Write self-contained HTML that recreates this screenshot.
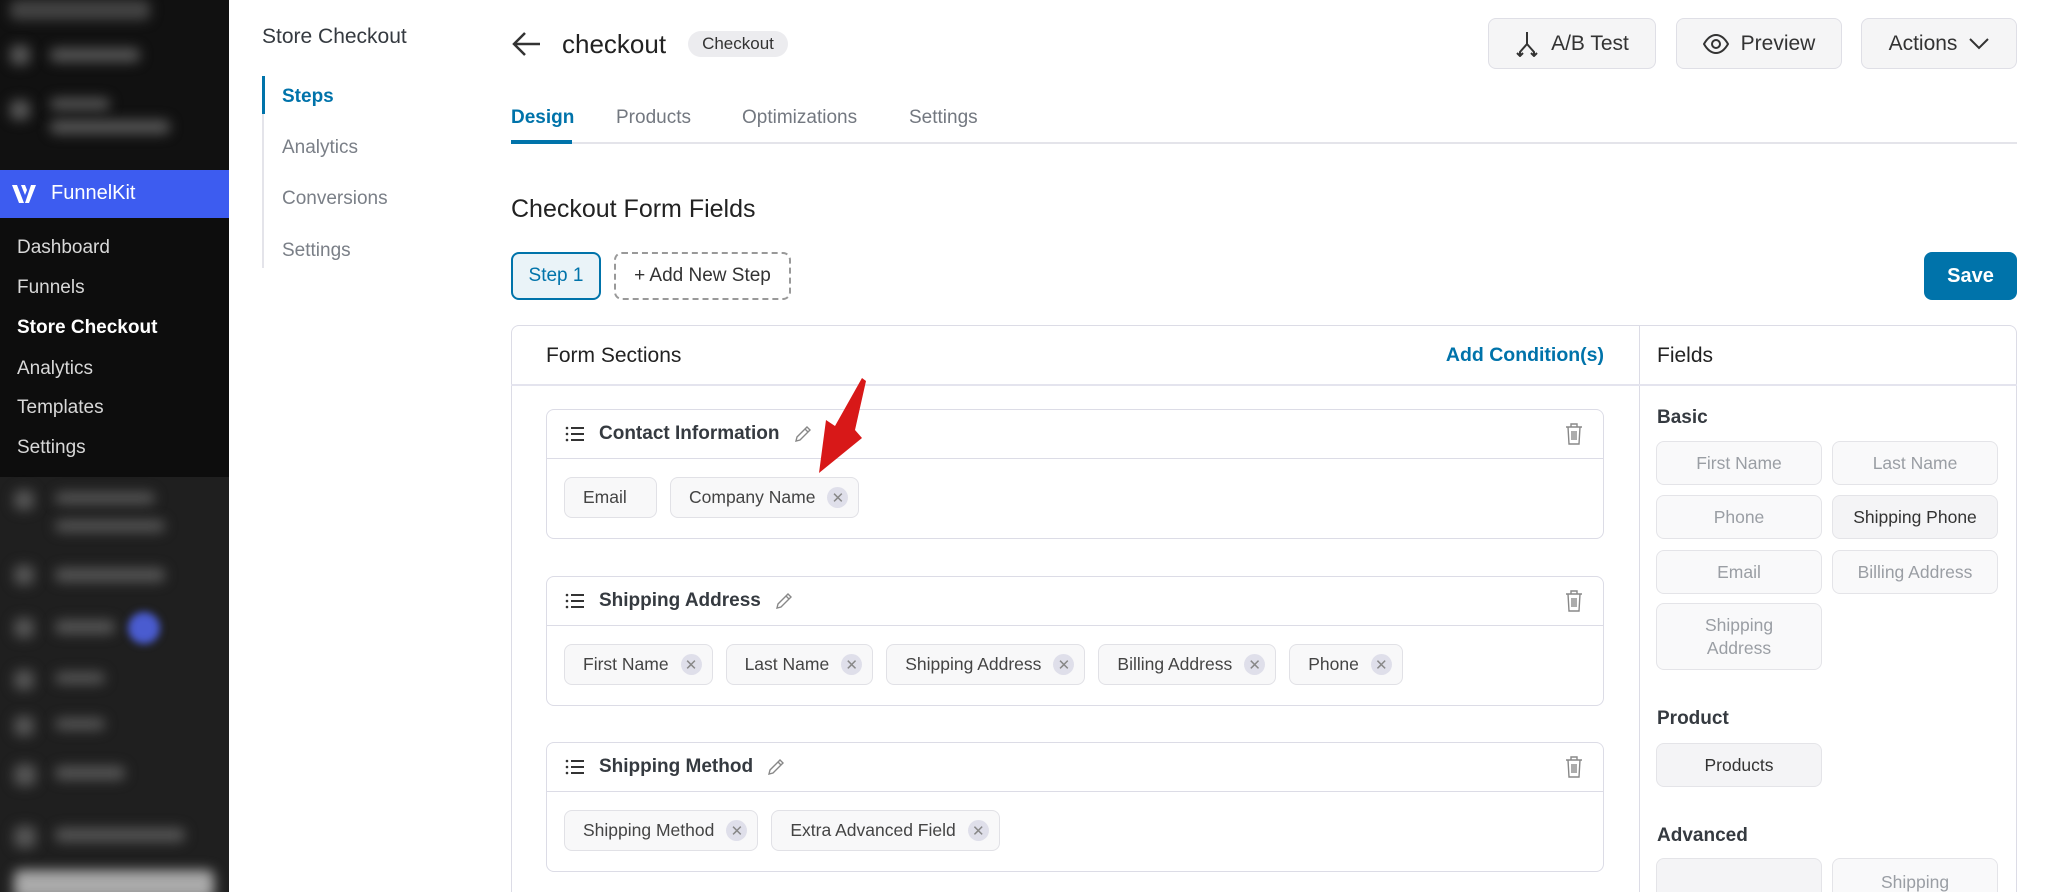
<!DOCTYPE html>
<html><head><meta charset="utf-8">
<style>
*{box-sizing:border-box;margin:0;padding:0}
html,body{width:2048px;height:892px;overflow:hidden}
body{background:#fff;font-family:"Liberation Sans",Arial,sans-serif;color:#353a40;position:relative}
#wrap{position:absolute;left:0;top:0;width:2048px;height:892px;overflow:hidden}
.a{position:absolute}
.side{left:0;top:0;width:229px;height:892px;background:#1f1f1f}
.blur{filter:blur(6px);background:#555;border-radius:6px}
.menu{color:#d8d8d8;font-size:19px;left:17px}
.nav2{font-size:19px;color:#7a7f87;left:282px}
.btn{background:#f5f5f6;border:1px solid #dfdfe6;border-radius:8px;font-size:21px;color:#333;display:flex;align-items:center;justify-content:center;gap:12px}
.tab{font-size:19px;color:#737880;top:106px}
.card{left:546px;width:1058px;border:1px solid #dcdce6;border-radius:8px;background:#fff}
.ch{height:49px;border-bottom:1px solid #dcdce6;display:flex;align-items:center;padding-left:18px;font-size:19px;font-weight:bold;color:#353a40;position:relative}
.chips{display:flex;gap:13px;padding:18px 0 0 17px}
.chip{height:41px;border:1px solid #e1e1e6;background:#f8f8f9;border-radius:8px;font-size:17.5px;color:#444;display:flex;align-items:center;padding:0 10px 0 18px;gap:12px;white-space:nowrap}
.x{width:21px;height:21px;border-radius:50%;background:#dfdfea;color:#888;font-size:15px;display:flex;align-items:center;justify-content:center}
.fb{width:166px;border:1px solid #e4e4e8;background:#f9f9fa;border-radius:8px;font-size:17.5px;color:#9a9ea4;display:flex;align-items:center;justify-content:center;text-align:center;line-height:23px}
.lbl{font-size:19px;font-weight:bold;color:#353a40;left:1657px}
</style></head><body><div id="wrap">
<div class="a side"></div>
<div class="a" style="left:0;top:0;width:229px;height:170px;background:#111"></div>
<div class="a blur" style="left:10px;top:0;width:140px;height:20px;background:#444"></div>
<div class="a blur" style="left:10px;top:45px;width:20px;height:20px"></div>
<div class="a blur" style="left:50px;top:48px;width:90px;height:14px"></div>
<div class="a blur" style="left:10px;top:100px;width:20px;height:20px"></div>
<div class="a blur" style="left:50px;top:98px;width:60px;height:12px"></div>
<div class="a blur" style="left:50px;top:120px;width:120px;height:14px"></div>
<div class="a" style="left:0;top:170px;width:229px;height:48px;background:#3d5cf0"></div>
<svg class="a" style="left:11px;top:183px" width="30" height="22" viewBox="0 0 30 22"><path d="M1 2 L8 20 L13 20 L6 2Z M10 2 L14 12 L16 7 L14 2Z M20 2 L14 20 L18 20 L25 2Z" fill="#fff"/></svg>
<div class="a" style="left:51px;top:182px;color:#fff;font-size:20px">FunnelKit</div>
<div class="a" style="left:0;top:218px;width:229px;height:259px;background:#0d0d0d"></div>
<div class="a menu" style="top:237px">Dashboard</div>
<div class="a menu" style="top:277px">Funnels</div>
<div class="a menu" style="top:317px;color:#fff;font-weight:bold">Store Checkout</div>
<div class="a menu" style="top:358px">Analytics</div>
<div class="a menu" style="top:397px">Templates</div>
<div class="a menu" style="top:437px">Settings</div>
<div class="a blur" style="left:14px;top:490px;width:20px;height:20px"></div>
<div class="a blur" style="left:55px;top:492px;width:100px;height:12px"></div>
<div class="a blur" style="left:55px;top:520px;width:110px;height:12px"></div>
<div class="a blur" style="left:14px;top:565px;width:20px;height:20px"></div>
<div class="a blur" style="left:55px;top:568px;width:110px;height:14px"></div>
<div class="a blur" style="left:14px;top:618px;width:20px;height:20px"></div>
<div class="a blur" style="left:55px;top:620px;width:60px;height:14px"></div>
<div class="a" style="left:128px;top:612px;width:32px;height:32px;border-radius:50%;background:#4a5cd0;filter:blur(4px)"></div>
<div class="a blur" style="left:14px;top:670px;width:20px;height:20px"></div>
<div class="a blur" style="left:55px;top:672px;width:50px;height:12px"></div>
<div class="a blur" style="left:14px;top:716px;width:20px;height:20px"></div>
<div class="a blur" style="left:55px;top:718px;width:50px;height:12px"></div>
<div class="a blur" style="left:14px;top:764px;width:22px;height:22px"></div>
<div class="a blur" style="left:55px;top:766px;width:70px;height:14px"></div>
<div class="a blur" style="left:14px;top:826px;width:22px;height:22px"></div>
<div class="a blur" style="left:55px;top:828px;width:130px;height:14px"></div>
<div class="a blur" style="left:14px;top:870px;width:200px;height:30px;background:#aaa"></div>

<div class="a" style="left:262px;top:25px;font-size:21px;color:#353a40">Store Checkout</div>
<div class="a" style="left:262px;top:76px;width:2px;height:192px;background:#e4e4ea"></div>
<div class="a" style="left:262px;top:76px;width:3px;height:38px;background:#0073aa"></div>
<div class="a nav2" style="top:86px;color:#0073aa;font-weight:bold">Steps</div>
<div class="a nav2" style="top:137px">Analytics</div>
<div class="a nav2" style="top:188px">Conversions</div>
<div class="a nav2" style="top:240px">Settings</div>

<svg class="a" style="left:512px;top:31px" width="30" height="26" viewBox="0 0 30 26"><path d="M28 13H3M13 2L2 13L13 24" stroke="#333" stroke-width="2.5" fill="none"/></svg>
<div class="a" style="left:562px;top:29px;font-size:26px;color:#222">checkout</div>
<div class="a" style="left:688px;top:31px;width:100px;height:26px;background:#ececef;border-radius:13px;font-size:17px;color:#333;display:flex;align-items:center;justify-content:center">Checkout</div>

<div class="a btn" style="left:1488px;top:18px;width:168px;height:51px"><svg width="24" height="26" viewBox="0 0 24 26"><path d="M12 1V13M12 13L5 21V25M12 13L19 21V25M2 22L5 25L8 22M16 22L19 25L22 22" stroke="#333" stroke-width="2" fill="none"/></svg>A/B Test</div>
<div class="a btn" style="left:1676px;top:18px;width:166px;height:51px"><svg width="26" height="20" viewBox="0 0 26 20"><path d="M1 10C5 3 9 1 13 1S21 3 25 10C21 17 17 19 13 19S5 17 1 10Z" stroke="#333" stroke-width="2" fill="none"/><circle cx="13" cy="10" r="4" stroke="#333" stroke-width="2" fill="none"/></svg>Preview</div>
<div class="a btn" style="left:1861px;top:18px;width:156px;height:51px">Actions<svg width="20" height="12" viewBox="0 0 20 12"><path d="M1 1L10 10L19 1" stroke="#333" stroke-width="2" fill="none"/></svg></div>

<div class="a tab" style="left:511px;top:107px;color:#0073aa;font-weight:bold">Design</div>
<div class="a tab" style="left:616px;top:107px">Products</div>
<div class="a tab" style="left:742px;top:107px">Optimizations</div>
<div class="a tab" style="left:909px;top:107px">Settings</div>
<div class="a" style="left:511px;top:142px;width:1506px;height:2px;background:#e4e4ea"></div>
<div class="a" style="left:511px;top:140px;width:61px;height:4px;background:#0073aa"></div>

<div class="a" style="left:511px;top:195px;font-size:25px;color:#222">Checkout Form Fields</div>
<div class="a" style="left:511px;top:252px;width:90px;height:48px;border:2px solid #0073aa;background:#eaf3f8;border-radius:8px;color:#0073aa;font-size:19px;display:flex;align-items:center;justify-content:center">Step 1</div>
<div class="a" style="left:614px;top:252px;width:177px;height:48px;border:2px dashed #999;border-radius:8px;color:#333;font-size:19px;display:flex;align-items:center;justify-content:center">+ Add New Step</div>
<div class="a" style="left:1924px;top:252px;width:93px;height:48px;background:#0073aa;border-radius:8px;color:#fff;font-size:20px;font-weight:bold;display:flex;align-items:center;justify-content:center">Save</div>

<div class="a" style="left:511px;top:325px;width:1506px;height:620px;border:1px solid #dcdce6;border-radius:8px"></div>
<div class="a" style="left:1639px;top:325px;width:1px;height:567px;background:#dcdce6"></div>
<div class="a" style="left:511px;top:384px;width:1506px;height:2px;background:#e4e4ee"></div>
<div class="a" style="left:546px;top:344px;font-size:21px;color:#222">Form Sections</div>
<div class="a" style="left:1404px;top:344px;font-size:19.5px;color:#0073aa;font-weight:bold;width:200px;text-align:right">Add Condition(s)</div>
<div class="a" style="left:1657px;top:344px;font-size:21px;color:#222">Fields</div>

<svg width="0" height="0" style="position:absolute"><defs>
<symbol id="ls" viewBox="0 0 20 16"><path d="M6 2H19M6 8H19M6 14H19" stroke="#333" stroke-width="2"/><circle cx="2" cy="2" r="1.3" fill="#333"/><circle cx="2" cy="8" r="1.3" fill="#333"/><circle cx="2" cy="14" r="1.3" fill="#333"/></symbol>
<symbol id="pen" viewBox="0 0 18 18"><path d="M2 16L3 12L13 2L16 5L6 15Z M11 4L14 7" stroke="#888" stroke-width="1.4" fill="none"/></symbol>
<symbol id="tr" viewBox="0 0 18 22"><path d="M1 4H17M6 4V1H12V4M3 4L4 21H14L15 4M7 8V17M9 8V17M11 8V17" stroke="#888" stroke-width="1.4" fill="none"/></symbol>
</defs></svg>

<div class="a card" style="top:409px;height:130px">
<div class="ch"><svg width="20" height="16"><use href="#ls"/></svg><span style="margin-left:14px">Contact Information</span><svg style="margin-left:14px" width="18" height="18"><use href="#pen"/></svg><svg style="position:absolute;right:20px;top:13px" width="18" height="22"><use href="#tr"/></svg></div>
<div class="chips"><div class="chip" style="width:93px">Email</div><div class="chip">Company Name<span class="x">✕</span></div></div>
</div>
<div class="a card" style="top:576px;height:130px">
<div class="ch"><svg width="20" height="16"><use href="#ls"/></svg><span style="margin-left:14px">Shipping Address</span><svg style="margin-left:14px" width="18" height="18"><use href="#pen"/></svg><svg style="position:absolute;right:20px;top:13px" width="18" height="22"><use href="#tr"/></svg></div>
<div class="chips"><div class="chip">First Name<span class="x">✕</span></div><div class="chip">Last Name<span class="x">✕</span></div><div class="chip">Shipping Address<span class="x">✕</span></div><div class="chip">Billing Address<span class="x">✕</span></div><div class="chip">Phone<span class="x">✕</span></div></div>
</div>
<div class="a card" style="top:742px;height:130px">
<div class="ch"><svg width="20" height="16"><use href="#ls"/></svg><span style="margin-left:14px">Shipping Method</span><svg style="margin-left:14px" width="18" height="18"><use href="#pen"/></svg><svg style="position:absolute;right:20px;top:13px" width="18" height="22"><use href="#tr"/></svg></div>
<div class="chips"><div class="chip">Shipping Method<span class="x">✕</span></div><div class="chip">Extra Advanced Field<span class="x">✕</span></div></div>
</div>

<div class="a lbl" style="top:407px">Basic</div>
<div class="a fb" style="left:1656px;top:441px;height:44px">First Name</div>
<div class="a fb" style="left:1832px;top:441px;height:44px">Last Name</div>
<div class="a fb" style="left:1656px;top:495px;height:44px">Phone</div>
<div class="a fb" style="left:1832px;top:495px;height:44px;color:#333;background:#f4f4f6">Shipping Phone</div>
<div class="a fb" style="left:1656px;top:550px;height:44px">Email</div>
<div class="a fb" style="left:1832px;top:550px;height:44px">Billing Address</div>
<div class="a fb" style="left:1656px;top:603px;height:67px">Shipping<br>Address</div>
<div class="a lbl" style="top:708px">Product</div>
<div class="a fb" style="left:1656px;top:743px;height:44px;color:#333;background:#f4f4f6">Products</div>
<div class="a lbl" style="top:825px">Advanced</div>
<div class="a fb" style="left:1656px;top:858px;height:60px;color:#333;background:#f4f4f6;padding-top:28px">Order Notes</div>
<div class="a fb" style="left:1832px;top:858px;height:60px;align-items:flex-start;padding-top:12px">Shipping</div>

<svg class="a" style="left:800px;top:370px" width="80" height="110" viewBox="0 0 80 110"><path d="M62 8 L66 11 L55 60 L62 68 L19 103 L26 50 L35 56 Z" fill="#d81818"/></svg>
</div></body></html>
